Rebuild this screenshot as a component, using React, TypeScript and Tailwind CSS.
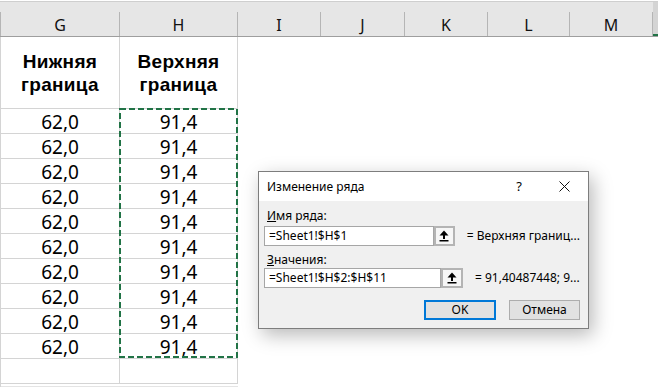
import { useState } from "react";

const cols = [
    { name: "G", w: "w-[118px]" },
    { name: "H", w: "w-[117px]" },
    { name: "I", w: "w-[82px]" },
    { name: "J", w: "w-[83px]" },
    { name: "K", w: "w-[82px]" },
    { name: "L", w: "w-[81px]" },
    { name: "M", w: "w-[82px]" },
];

const rows = Array.from({ length: 10 }, () => ({ low: "62,0", high: "91,4" }));

const Sep = () => <div className="w-px h-[24px] self-end bg-[#b5b5b5]" />;

const UpIcon = () => (
    <svg width="10" height="12" viewBox="0 0 10 12">
        <path d="M5 0.5 L9.5 5.5 L0.5 5.5 Z" fill="#000" />
        <rect x="4" y="5" width="2" height="4" fill="#000" />
        <rect x="0.5" y="10" width="9" height="1.5" fill="#000" />
    </svg>
);

const Field = ({ value, result }: { value: string; result: string }) => (
    <div className="flex items-center h-[20px]">
        <div className="w-[177px] h-full bg-white border border-[#a6a6a6] flex items-center pl-[4px] text-[12px] text-black">
            {value}
        </div>
        <button className="w-[22px] h-full border-2 border-[#b4b4b4] bg-[#f6f6f6] flex items-center justify-center">
            <UpIcon />
        </button>
        <span className="ml-[12px] text-[12px] text-black whitespace-nowrap">{result}</span>
    </div>
);

const HeadCell = ({ top, bottom, w }: { top: string; bottom: string; w: string }) => (
    <div className={`${w} border-r border-b border-[#d4d4d4] flex flex-col items-center justify-center font-bold text-[19px] text-black font-['Liberation_Sans',Arial,sans-serif] tracking-[0.3px]`}>
        <div className="h-[23px] leading-[23px]">{top}</div>
        <div className="h-[23px] leading-[23px]">{bottom}</div>
    </div>
);

const Dialog = () => {
    const [name] = useState("=Sheet1!$H$1");
    const [values] = useState("=Sheet1!$H$2:$H$11");

    return (
        <div className="absolute left-[258px] top-[171px] w-[331px] h-[158px] border border-[#7d7d7d] bg-[#f0f0f0] shadow-[4px_6px_18px_rgba(0,0,0,0.28)] flex flex-col font-['Noto_Sans',sans-serif]">
            <div className="h-[29px] bg-white flex items-center pl-[8px] text-[12px] text-black">
                <span className="flex-1">Изменение ряда</span>
                <span className="w-[10px] text-center text-[13px] leading-none mr-[35px]">?</span>
                <svg width="11" height="11" viewBox="0 0 11 11" className="mr-[18px]">
                    <path d="M0.5 0.5 L10.5 10.5 M10.5 0.5 L0.5 10.5" stroke="#111" strokeWidth="1" />
                </svg>
            </div>
            <div className="flex-1 flex flex-col pt-[7px] pl-[5px] pr-[8px]">
                <label className="ml-[3px] h-[16px] leading-[16px] text-[12px] text-black">
                    <span className="underline">И</span>мя ряда:
                </label>
                <div className="mt-[2px]">
                    <Field value={name} result="= Верхняя границ..." />
                </div>
                <label className="ml-[3px] mt-[6px] h-[16px] leading-[16px] text-[12px] text-black">
                    <span className="underline">З</span>начения:
                </label>
                <div>
                    <Field value={values} result="= 91,40487448; 9..." />
                </div>
                <div className="mt-[12px] flex justify-end gap-[13px]">
                    <button className="w-[72px] h-[20px] border-2 border-[#0078d7] bg-[#e1e1e1] text-[12px] text-black leading-none">
                        OK
                    </button>
                    <button className="w-[71px] h-[20px] border border-[#adadad] bg-[#e1e1e1] text-[12px] text-black leading-none">
                        Отмена
                    </button>
                </div>
            </div>
        </div>
    );
};

export default function App() {
    return (
        <div className="relative w-[658px] h-[388px] bg-white overflow-hidden font-['Noto_Sans',sans-serif]">
            <div className="h-px bg-white" />
            <div className="h-[36px] flex bg-[#e6e6e6] border-t border-b border-t-[#cfcfcf] border-b-[#9e9e9e]">
                <Sep />
                {cols.map((c) => (
                    <div key={c.name} className="flex">
                        <div className={`${c.w} flex items-center justify-center pt-[12px] text-[16px] text-[#111]`}>
                            {c.name}
                        </div>
                        <Sep />
                    </div>
                ))}
                <div className="flex-1 bg-[#d4d4d4] border-b-2 border-[#217346]" />
            </div>

            <div className="w-[238px] border-l border-[#d4d4d4] flex flex-col">
                <div className="flex h-[72px]">
                    <HeadCell top="Нижняя" bottom="граница" w="w-[119px]" />
                    <HeadCell top="Верхняя" bottom="граница" w="w-[118px]" />
                </div>
                {rows.map((r, i) => (
                    <div key={i} className="flex h-[25px] text-[19px] text-black">
                        <div className="w-[119px] border-r border-b border-[#d4d4d4] flex items-center justify-center leading-none pt-[2px]">
                            {r.low}
                        </div>
                        <div className="w-[118px] border-r border-b border-[#d4d4d4] flex items-center justify-center leading-none pt-[2px]">
                            {r.high}
                        </div>
                    </div>
                ))}
                <div className="flex h-[25px]">
                    <div className="w-[119px] border-r border-b border-[#d4d4d4]" />
                    <div className="w-[118px] border-r border-b border-[#d4d4d4]" />
                </div>
                <div className="mt-[2px] h-px bg-[#e4e4e4]" />
            </div>

            <svg className="absolute left-[119px] top-[108px]" width="119" height="250" viewBox="0 0 119 250">
                <rect x="1" y="1" width="117" height="248" fill="none" stroke="#217346" strokeWidth="2" strokeDasharray="6 3" />
            </svg>

            <Dialog />
        </div>
    );
}
